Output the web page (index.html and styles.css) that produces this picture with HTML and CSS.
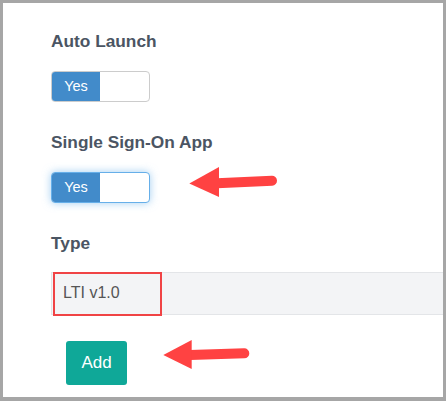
FILE: index.html
```html
<!DOCTYPE html>
<html lang="en">
<head>
  <meta charset="UTF-8">
  <title>Tool Settings</title>
  <link rel="stylesheet" href="styles.css">
</head>
<body>
  <div class="frame">
    <div class="field">
      <div class="label">Auto Launch</div>
      <div class="toggle">
        <span class="toggle-on">Yes</span>
        <span class="toggle-off"></span>
      </div>
    </div>

    <div class="field">
      <div class="label">Single Sign-On App</div>
      <div class="row">
        <div class="toggle focused">
          <span class="toggle-on">Yes</span>
          <span class="toggle-off"></span>
        </div>
        <svg class="arrow arrow-sso" width="96" height="37" viewBox="0 0 96 37">
          <line x1="31" y1="20.3" x2="86" y2="17.7" stroke="#ff4242" stroke-width="10" stroke-linecap="round"/>
          <polygon points="3.3,20.5 33,4 33,34" fill="#ff4242"/>
        </svg>
      </div>
    </div>

    <div class="field field-type">
      <div class="label">Type</div>
      <div class="select">
        <span class="select-value">LTI v1.0</span>
        <span class="callout"></span>
      </div>
    </div>

    <div class="row actions">
      <button type="button" class="btn-add">Add</button>
      <svg class="arrow arrow-add" width="95" height="38" viewBox="0 0 95 38">
        <line x1="30" y1="19" x2="84.3" y2="17.3" stroke="#ff4242" stroke-width="10" stroke-linecap="round"/>
        <polygon points="3.3,19 31.7,4 31.7,33" fill="#ff4242"/>
      </svg>
    </div>
  </div>
</body>
</html>
```

FILE: styles.css
```css
body {
  margin: 0;
  font-family: "Liberation Sans", Arial, sans-serif;
  background: #fff;
}
.frame {
  box-sizing: border-box;
  width: 446px;
  height: 401px;
  border: 3px solid #a6a6a6;
  border-bottom-width: 4px;
  padding: 27.5px 0 0 48px;
  overflow: hidden;
}
.field {
  margin-bottom: 29.5px;
}
.label {
  font-size: 17.3px;
  font-weight: bold;
  line-height: 20px;
  color: #4b5563;
  margin-bottom: 20.5px;
}
.field-type .label {
  margin-bottom: 19px;
}
.row {
  position: relative;
}
.toggle {
  box-sizing: border-box;
  display: flex;
  width: 99px;
  height: 31px;
  border: 1px solid #cccccc;
  border-radius: 4px;
  overflow: hidden;
  background: #fff;
}
.toggle.focused {
  border-color: #66afe9;
  box-shadow: 0 0 8px rgba(102, 175, 233, 0.6);
}
.toggle-on {
  width: 48px;
  background: #428bca;
  color: #fff;
  font-size: 14.5px;
  line-height: 29px;
  text-align: center;
}
.toggle-off {
  flex: 1;
}
.select {
  position: relative;
  box-sizing: border-box;
  height: 43px;
  background: #f3f4f6;
  border: 1px solid #e3e5e8;
  border-right: none;
  padding-left: 11px;
  display: flex;
  align-items: center;
}
.select-value {
  font-size: 16px;
  color: #555;
}
.callout {
  position: absolute;
  left: 1px;
  top: -1px;
  width: 109px;
  height: 44px;
  box-sizing: border-box;
  border: 2px solid #f04345;
}
.actions {
  margin-top: -3.5px;
  padding-left: 15px;
}
.btn-add {
  width: 61px;
  height: 44px;
  border: none;
  border-radius: 3px;
  background: #0fa898;
  color: #fff;
  font-family: "Liberation Sans", Arial, sans-serif;
  font-size: 17px;
  padding: 0;
}
.arrow {
  position: absolute;
}
.arrow-sso {
  left: 135px;
  top: -9px;
}
.arrow-add {
  left: 109px;
  top: -5px;
}
```
